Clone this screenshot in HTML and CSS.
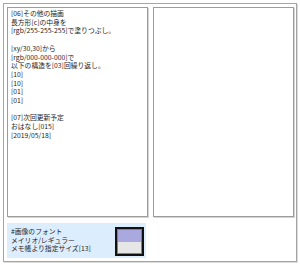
FILE: index.html
```html
<!DOCTYPE html>
<html lang="ja">
<head>
  <meta charset="UTF-8" />
  <title>描画メモ</title>
  <link rel="stylesheet" href="styles.css">
</head>
<body>
  <div class="frame">
    <div class="panes">
      <div class="pane memo">
        <p>[06]その他の描画</p>
        <p>長方形[c]の中身を</p>
        <p>[rgb/255-255-255]で塗りつぶし。</p>
        <p>&nbsp;</p>
        <p>[xy/30,30]から</p>
        <p>[rgb/000-000-000]で</p>
        <p>以下の構造を[03]回繰り返し。</p>
        <p>[10]</p>
        <p>[10]</p>
        <p>[01]</p>
        <p>[01]</p>
        <p>&nbsp;</p>
        <p>[07]次回更新予定</p>
        <p>おはなし[015]</p>
        <p>[2019/05/18]</p>
      </div>
      <div class="pane preview"></div>
    </div>

    <div class="font-info">
      <div class="font-text">
        <p>#画像のフォント</p>
        <p>メイリオ/レギュラー</p>
        <p>メモ帳より指定サイズ[13]</p>
      </div>
      <div class="swatch">
        <div class="swatch-top"></div>
        <div class="swatch-bottom"></div>
      </div>
    </div>
  </div>
</body>
</html>
```

FILE: styles.css
```css
body {
  margin: 0;
  background: #fff;
  font-family: "Noto Sans CJK JP", "Noto Sans", sans-serif;
  color: #1e1e1e;
}

p {
  margin: 0;
}

.frame {
  margin: 3px;
  width: 292px;
  height: 257px;
  box-sizing: content-box;
  border: 1px solid #a4a4a4;
  box-shadow: 1px 1px 0 #dcdcdc;
  padding: 0;
}

.panes {
  display: grid;
  grid-template-columns: 141px 141px;
  gap: 5px;
  padding: 3px 0 0 3px;
}

.pane {
  height: 210px;
  box-sizing: border-box;
  border: 1px solid #9c9c9c;
  box-shadow: 1px 1px 0 #d4d4d4;
  background: #fff;
}

.memo {
  padding: 1px 3px;
  font-size: 6.8px;
  line-height: 8.7px;
  white-space: nowrap;
}

.font-info {
  display: flex;
  justify-content: space-between;
  width: 139px;
  height: 35px;
  box-sizing: border-box;
  margin: 6px 0 0 3px;
  padding: 4px 2px 0 4px;
  background: #dcedfd;
}

.font-text {
  font-size: 6.8px;
  line-height: 8.7px;
  white-space: nowrap;
}

.swatch {
  width: 29px;
  height: 29px;
  box-sizing: border-box;
  border: 2px solid #111;
  box-shadow: inset 0 0 0 1px #b86a6a;
  display: flex;
  flex-direction: column;
}

.swatch-top {
  flex: 1;
  background: #a9a9df;
  margin: 1px 1px 0 1px;
}

.swatch-bottom {
  flex: 1;
  background: #e6e6e6;
  margin: 0 1px 1px 1px;
}
```
